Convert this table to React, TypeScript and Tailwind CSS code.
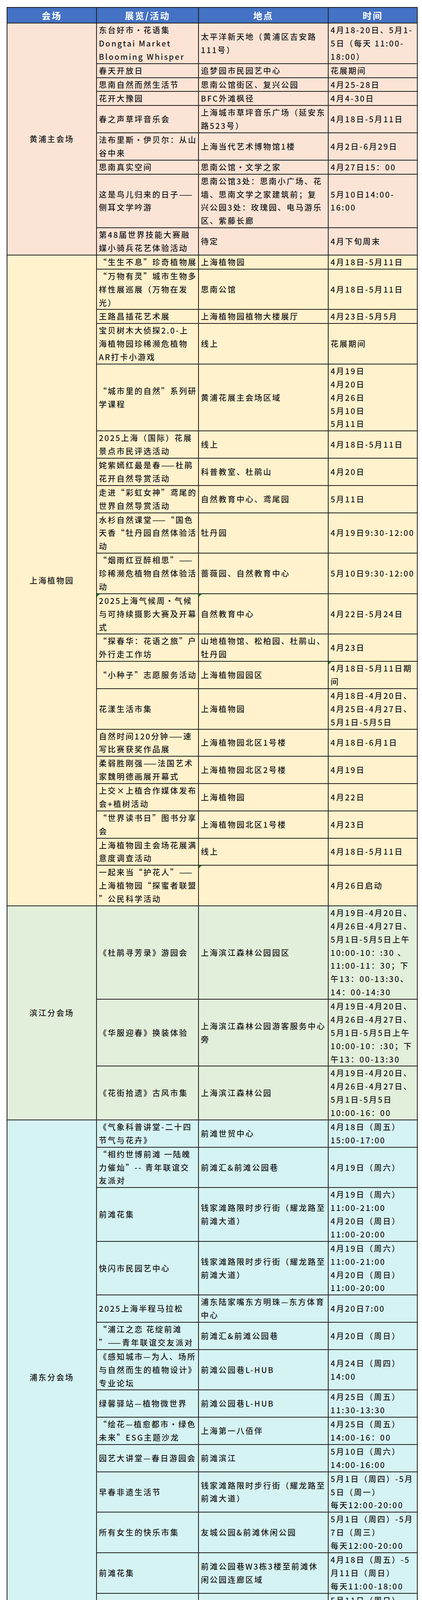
import React from "react";

type Row = { a: string[]; b: string[]; c: string[]; tri?: string[] };
type Section = { name: string; bg: string; rows: Row[] };

const pd4 = ["4月19日（周六）", "11:00-21:00", "4月20日（周日）", "11:00-20:00"];

const sections: Section[] = [
  {
    name: "黄浦主会场",
    bg: "bg-[#fbe4d5]",
    rows: [
      { a: ["东台好市·花语集", "Dongtai Market", "Blooming Whisper"], b: ["太平洋新天地（黄浦区吉安路", "111号）"], c: ["4月18-20日、5月1-", "5日（每天 11:00-", "18:00）"] },
      { a: ["春天开放日"], b: ["追梦园市民园艺中心"], c: ["花展期间"] },
      { a: ["思南自然而然生活节"], b: ["思南公馆街区、复兴公园"], c: ["4月25-28日"] },
      { a: ["花开大豫园"], b: ["BFC外滩枫径"], c: ["4月4-30日"] },
      { a: ["春之声草坪音乐会"], b: ["上海城市草坪音乐广场（延安东", "路523号）"], c: ["4月18日-5月11日"] },
      { a: ["法布里斯·伊贝尔：从山", "谷中来"], b: ["上海当代艺术博物馆1楼"], c: ["4月2日-6月29日"] },
      { a: ["思南真实空间"], b: ["思南公馆·文学之家"], c: ["4月27日15：00"] },
      { a: ["这是鸟儿归来的日子——", "侧耳文学吟游"], b: ["思南公馆3处：思南小广场、花", "墙、思南文学之家建筑前；复", "兴公园3处：玫瑰园、电马游乐", "区、紫藤长廊"], c: ["5月10日14:00-", "16:00"] },
      { a: ["第48届世界技能大赛融", "媒小骑兵花艺体验活动"], b: ["待定"], c: ["4月下旬周末"] },
    ],
  },
  {
    name: "上海植物园",
    bg: "bg-[#fff2cc]",
    rows: [
      { a: ["“生生不息”珍奇植物展"], b: ["上海植物园"], c: ["4月18日-5月11日"] },
      { a: ["“万物有灵”城市生物多", "样性展巡展（万物在发", "光）"], b: ["思南公馆"], c: ["4月18日-5月11日"] },
      { a: ["王路昌插花艺术展"], b: ["上海植物园植物大楼展厅"], c: ["4月23日-5月5月"] },
      { a: ["宝贝树木大侦探2.0-上", "海植物园珍稀濒危植物", "AR打卡小游戏"], b: ["线上"], c: ["花展期间"] },
      { a: ["“城市里的自然”系列研", "学课程"], b: ["黄浦花展主会场区域"], c: ["4月19日", "4月20日", "4月26日", "5月10日", "5月11日"] },
      { a: ["2025上海（国际）花展", "景点市民评选活动"], b: ["线上"], c: ["4月18日-5月11日"] },
      { a: ["姹紫嫣红最是春——杜鹃", "花开自然导赏活动"], b: ["科普教室、杜鹃山"], c: ["4月20日"] },
      { a: ["走进“彩虹女神”鸢尾的", "世界自然导赏活动"], b: ["自然教育中心、鸢尾园"], c: ["5月11日"] },
      { a: ["水杉自然课堂——“国色", "天香“牡丹园自然体验活", "动"], b: ["牡丹园"], c: ["4月19日9:30-12:00"] },
      { a: ["“烟雨红豆醉相思”——", "珍稀濒危植物自然体验活", "动"], b: ["蔷薇园、自然教育中心"], c: ["5月10日9:30-12:00"] },
      { a: ["2025上海气候周·气候", "与可持续摄影大赛及开幕", "式"], b: ["自然教育中心"], c: ["4月22日-5月24日"], tri: ["a", "b"] },
      { a: ["“探春华：花语之旅”户", "外行走工作坊"], b: ["山地植物馆、松柏园、杜鹃山、", "牡丹园"], c: ["4月23日"] },
      { a: ["“小种子”志愿服务活动"], b: ["上海植物园园区"], c: ["4月18日-5月11日期", "间"], tri: ["c"] },
      { a: ["花漾生活市集"], b: ["上海植物园"], c: ["4月18日-4月20日、", "4月25日-4月27日、", "5月1日-5月5日"] },
      { a: ["自然时间120分钟——速", "写比赛获奖作品展"], b: ["上海植物园北区1号楼"], c: ["4月18日-6月1日"] },
      { a: ["柔弱胜刚强——法国艺术", "家魏明德画展开幕式"], b: ["上海植物园北区2号楼"], c: ["4月19日"] },
      { a: ["上交×上植合作媒体发布", "会+植树活动"], b: ["上海植物园"], c: ["4月22日"] },
      { a: ["“世界读书日”图书分享", "会"], b: ["上海植物园北区1号楼"], c: ["4月23日"] },
      { a: ["上海植物园主会场花展满", "意度调查活动"], b: ["线上"], c: ["4月18日-5月11日"] },
      { a: ["一起来当“护花人”——", "上海植物园“探蜜者联盟", "”公民科学活动"], b: [], c: ["4月26日启动"], tri: ["b"] },
    ],
  },
  {
    name: "滨江分会场",
    bg: "bg-[#e2efda]",
    rows: [
      { a: ["《杜鹃寻芳录》游园会"], b: ["上海滨江森林公园园区"], c: ["4月19日-4月20日、", "4月26日-4月27日、", "5月1日-5月5日上午", "10:00-10：:30 、", "11:00-11：30；下", "午13：00-13:30、", "14：00-14:30"] },
      { a: ["《华服迎春》换装体验"], b: ["上海滨江森林公园游客服务中心", "旁"], c: ["4月19日-4月20日、", "4月26日-4月27日、", "5月1日-5月5日上午", "10:00-10：:30；下", "午13：00-13:30"] },
      { a: ["《花街拾遗》古风市集"], b: ["上海滨江森林公园"], c: ["4月19日-4月20日、", "4月26日-4月27日、", "5月1日-5月5日", "10:00-16：00"] },
    ],
  },
  {
    name: "浦东分会场",
    bg: "bg-[#d5f3f2]",
    rows: [
      { a: ["《气象科普讲堂-二十四", "节气与花卉》"], b: ["前滩世贸中心"], c: ["4月18日（周五）", "15:00-17:00"] },
      { a: ["“相约世博前滩  一陆魄", "力催灿”-- 青年联谊交", "友派对"], b: ["前滩汇&前滩公园巷"], c: ["4月19日（周六）"] },
      { a: ["前滩花集"], b: ["钱家滩路限时步行街（耀龙路至", "前滩大道）"], c: pd4 },
      { a: ["快闪市民园艺中心"], b: ["钱家滩路限时步行街（耀龙路至", "前滩大道）"], c: pd4 },
      { a: ["2025上海半程马拉松"], b: ["浦东陆家嘴东方明珠—东方体育", "中心"], c: ["4月20日7:00"] },
      { a: ["“浦江之恋 花绽前滩", "”——青年联谊交友派对"], b: ["前滩汇&前滩公园巷"], c: ["4月20日（周日）"] },
      { a: ["《感知城市—为人、场所", "与自然而生的植物设计》", "专业论坛"], b: ["前滩公园巷L-HUB"], c: ["4月24日（周四）", "14:00"] },
      { a: ["绿馨驿站—植物微世界"], b: ["前滩公园巷L-HUB"], c: ["4月25日（周五）", "11:30-13:30"] },
      { a: ["“绘花—植愈都市·绿色", "未来”ESG主题沙龙"], b: ["上海第一八佰伴"], c: ["4月25日（周五）", "14:00-16：00"] },
      { a: ["园艺大讲堂—春日游园会"], b: ["前滩滨江"], c: ["5月10日（周六）", "14:00-16:00"] },
      { a: ["早春非遗生活节"], b: ["钱家滩路限时步行街（耀龙路至", "前滩大道）"], c: ["5月1日（周四）-5月", "5日（周一）", "每天12:00-20:00"] },
      { a: ["所有女生的快乐市集"], b: ["友城公园&前滩休闲公园"], c: ["5月1日（周四）-5月", "7日（周三）", "每天12:00-20:00"] },
      { a: ["前滩花集"], b: ["前滩公园巷W3栋3楼至前滩休", "闲公园连廊区域"], c: ["4月18日（周五）-5", "月11日（周日）", "每天11:00-18:00"] },
      { a: ["绿馨驿站—缤纷花束"], b: ["前滩公园巷L-HUB"], c: ["5月11日（周日）", "14:00-15:30"] },
      { a: ["五五购物节浦东系列活动"], b: ["浦东新区各大商圈、商场等"], c: ["4月底-6月底"] },
    ],
  },
  {
    name: "奉贤分会场",
    bg: "bg-[#fadadd]",
    rows: [
      { a: ["与自然相处的365天——", "奉贤区生物多样性展"], b: ["泡泡公园花好月圆大草坪"], c: ["4月28日-5月22日"] },
      { a: ["花开南上海，绿博士大讲", "堂之奉贤篇"], b: ["奉贤区博物馆"], c: ["4月29日"] },
      { a: ["花开南上海，书香润贤城", "——奉贤花展全民阅读推", "广活动"], b: ["泡泡公园阅读花园"], c: ["4月30日"] },
      { a: ["Bulu自然探秘"], b: ["泡泡公园"], c: ["5月1日-5月5日"] },
      { a: ["大学生文创市集"], b: ["泡泡公园花好月圆大草坪"], c: ["5月1日-5月5日"] },
      { a: ["五一假日花市"], b: ["泡泡公园二号门"], c: ["5月1日-5月5日"] },
      { a: ["上海市民插花大赛"], b: ["奉贤区博物馆"], c: ["5月1日"] },
    ],
  },
  {
    name: "临港分会场",
    bg: "bg-[#d9e2f3]",
    rows: [
      { a: ["春日湖畔，邂逅花海"], b: ["滴水湖月季园-云朵广场"], c: ["5月2日-5月4日"] },
      { a: ["花漾临港·集章送礼"], b: ["二环城市公园特色商户点位"], c: ["4月25日-5月5日"] },
      { a: ["2025悦动滴水湖生活节"], b: ["滴水湖广场"], c: ["5月1日-5月5日"] },
      { a: ["滴水湖春天歌会"], b: ["滴水湖广场悦动舞台"], c: ["5月1日、5月3日"] },
    ],
  },
  {
    name: "徐汇分会场",
    bg: "bg-[#fbe4d5]",
    rows: [
      { a: ["草坪瑜伽"], b: ["上音花园草坪"], c: ["4月29日"] },
      { a: ["“人文汇萃 向美而行", "”2025年徐汇区各街镇", "群众文化周周演"], b: ["襄阳公园六角亭前"], c: ["4月30日下午"] },
      { a: ["襄阳公园梧桐音乐会"], b: ["襄阳公园六角亭前"], c: ["5月1日上午"] },
      { a: ["“千年萨迦 申生不息”", "萨迦文旅推介活动"], b: ["襄阳公园六角亭前"], c: ["5月1日下午"] },
      { a: ["环贸春日市集"], b: ["南昌路沿线"], c: ["5月1日-5月4日"] },
      { a: ["阳光合唱团"], b: ["东湖绿地"], c: ["5月2日"] },
      { a: ["亲子手作课堂"], b: ["乔家栅淮海路体验中心"], c: ["5月3日"] },
      { a: ["爵士乐表演"], b: ["衡山路8号"], c: ["4月28日-5月11日"] },
      { a: ["咖啡市集"], b: ["永嘉路309号嘉澜庭"], c: ["5月2日-5月3日"] },
    ],
  },
];

function Cell({ lines, tri }: { lines: string[]; tri?: boolean }) {
  return (
    <td className="relative border-2 border-[#1e1e1e] px-[5px] py-0 align-middle text-left leading-[33.88px]">
      {lines.map((l, i) => (
        <div key={i} className="whitespace-nowrap">
          {l}
        </div>
      ))}
      {tri && (
        <span className="absolute left-0 top-0 h-0 w-0 border-t-[7px] border-r-[7px] border-t-[#1e8a1e] border-r-transparent" />
      )}
    </td>
  );
}

export default function App() {
  return (
    <div className="h-[5157px] overflow-hidden bg-white pl-[17px] pt-[18px]">
      <table className="w-[1050px] table-fixed border-collapse font-['Noto_Sans_CJK_SC',sans-serif] text-[20px] font-medium tracking-[2.8px] text-[#1a1a1a]">
        <colgroup>
          <col className="w-[229px]" />
          <col className="w-[261px]" />
          <col className="w-[332px]" />
          <col className="w-[228px]" />
        </colgroup>
        <thead>
          <tr className="bg-[#4472c4] text-white">
            {["会场", "展览/活动", "地点", "时间"].map((h) => (
              <th
                key={h}
                className="h-[40px] border-2 border-[#1e1e1e] p-0 text-center align-middle text-[23px] font-bold leading-[36px] tracking-[3px]"
              >
                {h}
              </th>
            ))}
          </tr>
        </thead>
        <tbody>
          {sections.map((s) =>
            s.rows.map((r, i) => (
              <tr key={s.name + i} className={s.bg}>
                {i === 0 && (
                  <td
                    rowSpan={s.rows.length}
                    className="border-2 border-[#1e1e1e] p-0 text-center align-middle leading-[33.88px]"
                  >
                    {s.name}
                  </td>
                )}
                <Cell lines={r.a} tri={r.tri?.includes("a")} />
                <Cell lines={r.b} tri={r.tri?.includes("b")} />
                <Cell lines={r.c} tri={r.tri?.includes("c")} />
              </tr>
            ))
          )}
        </tbody>
      </table>
    </div>
  );
}
